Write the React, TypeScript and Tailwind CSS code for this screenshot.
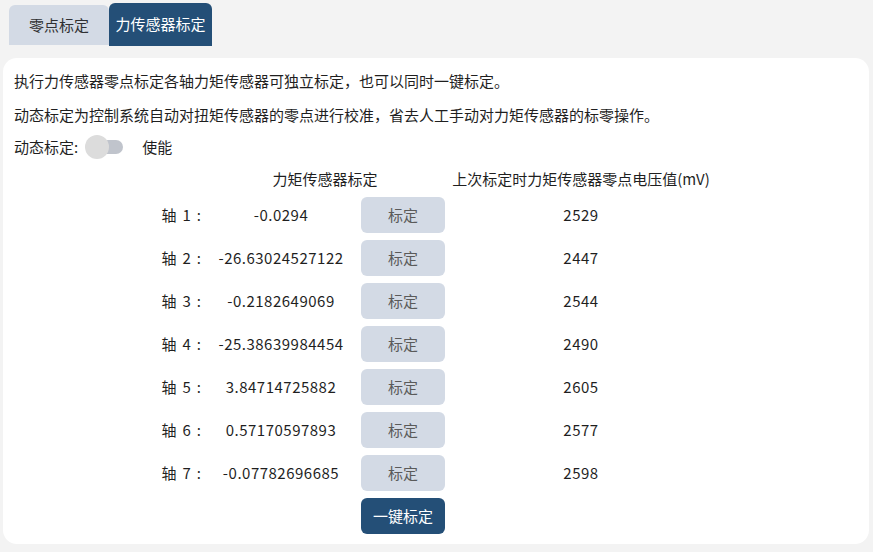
import React from "react";

const rows = [
  { axis: 1, value: "-0.0294", mv: "2529" },
  { axis: 2, value: "-26.63024527122", mv: "2447" },
  { axis: 3, value: "-0.2182649069", mv: "2544" },
  { axis: 4, value: "-25.38639984454", mv: "2490" },
  { axis: 5, value: "3.84714725882", mv: "2605" },
  { axis: 6, value: "0.57170597893", mv: "2577" },
  { axis: 7, value: "-0.07782696685", mv: "2598" },
];

export default function App() {
  return (
    <div
      className="w-[873px] h-[552px] bg-[#f3f3f3] text-[15px] text-[#1f1f1f] overflow-hidden"
      style={{ fontFamily: '"Noto Sans CJK SC", "Noto Sans", sans-serif' }}
    >
      <div className="flex h-[46px] pl-[9px] items-start">
        <div className="mt-[5px] h-[40px] w-[100px] rounded-t-[6px] bg-[#d3dae5] flex items-center justify-center text-[#303133]">
          零点标定
        </div>
        <div className="mt-[3px] h-[43px] w-[103px] rounded-t-[6px] bg-[#244f77] flex items-center justify-center text-white">
          力传感器标定
        </div>
      </div>
      <div className="mt-[12px] ml-[3px] w-[866px] rounded-[14px] bg-white pt-[11px] pb-[10px] px-[11px]">
        <p className="h-[24px] leading-[24px]">
          执行力传感器零点标定各轴力矩传感器可独立标定，也可以同时一键标定。
        </p>
        <p className="mt-[10px] h-[24px] leading-[24px]">
          动态标定为控制系统自动对扭矩传感器的零点进行校准，省去人工手动对力矩传感器的标零操作。
        </p>
        <div className="mt-[9px] h-[22px] flex items-center">
          <span>动态标定:</span>
          <div className="relative ml-[7px] w-[38px] h-[24px]">
            <div className="absolute left-[6px] right-0 top-[5px] h-[14px] rounded-full bg-[#c0c4cc]" />
            <div className="absolute left-0 top-0 w-[24px] h-[24px] rounded-full bg-[#dcdcdc]" />
          </div>
          <span className="ml-[19px]">使能</span>
        </div>
        <div className="mt-[10px] h-[22px] flex items-center">
          <div className="w-[191px]" />
          <div className="w-[240px] text-center">力矩传感器标定</div>
          <div className="w-[272px] text-center">上次标定时力矩传感器零点电压值(mV)</div>
        </div>
        <div className="mt-[7px] flex flex-col gap-[7px]">
          {rows.map((r) => (
            <div key={r.axis} className="h-[36px] flex items-center">
              <div className="w-[191px] pr-[4px] flex justify-end">
                <span>轴</span>
                <span className="ml-[6px]">{r.axis}</span>
                <span className="ml-[6px]">:</span>
              </div>
              <div className="w-[152px] text-center tracking-[0.5px]">{r.value}</div>
              <button className="ml-[4px] w-[84px] h-[36px] rounded-[6px] bg-[#d3dae5] text-[#5a5a5a]">
                标定
              </button>
              <div className="w-[272px] text-center tracking-[0.5px]">{r.mv}</div>
            </div>
          ))}
          <div className="h-[36px] flex items-center">
            <div className="w-[347px]" />
            <button className="w-[84px] h-[36px] rounded-[6px] bg-[#244f77] text-white">
              一键标定
            </button>
          </div>
        </div>
      </div>
    </div>
  );
}
